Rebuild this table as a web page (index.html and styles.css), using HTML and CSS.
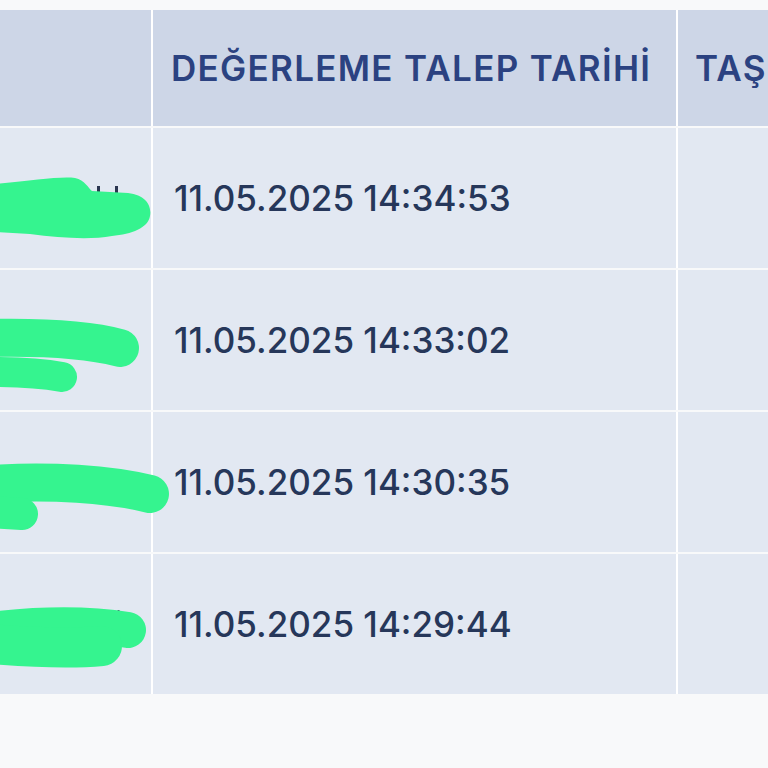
FILE: index.html
```html
<!DOCTYPE html>
<html lang="tr">
<head>
<meta charset="utf-8">
<link rel="stylesheet" href="styles.css">
</head>
<body>
<div class="page">
  <div class="table">
    <div class="row head">
      <div class="cell c1"></div>
      <div class="cell c2"><span class="th">DEĞERLEME TALEP TARİHİ</span></div>
      <div class="cell c3"><span class="th">TAŞINMAZ</span></div>
    </div>
    <div class="row">
      <div class="cell c1">
        <svg class="mask" viewBox="0 0 180 140" width="180" height="140">
          <rect x="97" y="58" width="3" height="10" fill="#2a3550"/>
          <rect x="115" y="58" width="3" height="10" fill="#2a3550"/>
          <path d="M-5 56 C30 53 60 48 75 50 C85 52 88 60 92 63 L128 65 C146 67 152 78 150 88 C148 100 132 106 112 108 C90 112 60 110 30 106 L-5 104 Z" fill="#35f48f"/>
        </svg>
      </div>
      <div class="cell c2"><span class="td">11.05.2025 14:34:53</span></div>
      <div class="cell c3"></div>
    </div>
    <div class="row">
      <div class="cell c1">
        <svg class="mask" viewBox="0 0 180 140" width="180" height="140">
          <rect x="116" y="59" width="2" height="2" fill="#2a3550"/>
          <path d="M-10 68 C40 67 90 70 120 78" stroke="#35f48f" stroke-width="38" stroke-linecap="round" fill="none"/>
          <path d="M-10 102 C20 102 45 104 62 107" stroke="#35f48f" stroke-width="30" stroke-linecap="round" fill="none"/>
        </svg>
      </div>
      <div class="cell c2"><span class="td">11.05.2025 14:33:02</span></div>
      <div class="cell c3"></div>
    </div>
    <div class="row">
      <div class="cell c1">
        <svg class="mask" viewBox="0 0 180 140" width="180" height="140">
          <rect x="116" y="60" width="2" height="2" fill="#2a3550"/>
          <rect x="98" y="61" width="2" height="2" fill="#2a3550"/>
          <path d="M-10 72 C50 68 110 72 150 82" stroke="#35f48f" stroke-width="38" stroke-linecap="round" fill="none"/>
          <path d="M-10 100 L22 102" stroke="#35f48f" stroke-width="32" stroke-linecap="round" fill="none"/>
        </svg>
      </div>
      <div class="cell c2"><span class="td">11.05.2025 14:30:35</span></div>
      <div class="cell c3"></div>
    </div>
    <div class="row last">
      <div class="cell c1">
        <svg class="mask" viewBox="0 0 180 140" width="180" height="140">
          <rect x="98" y="56" width="3" height="3" rx="1.5" fill="#2a3550"/>
          <rect x="117" y="56" width="3" height="3" rx="1.5" fill="#2a3550"/>
          <path d="M-10 76 C40 70 90 70 128 76" stroke="#35f48f" stroke-width="36" stroke-linecap="round" fill="none"/>
          <path d="M-10 90 C40 94 80 94 102 92" stroke="#35f48f" stroke-width="40" stroke-linecap="round" fill="none"/>
        </svg>
      </div>
      <div class="cell c2"><span class="td">11.05.2025 14:29:44</span></div>
      <div class="cell c3"></div>
    </div>
  </div>
</div>
</body>
</html>
```
FILE: styles.css
```css
* { box-sizing: border-box; }
html, body {
  margin: 0;
  padding: 0;
  background: #f8f9fa;
  width: 768px;
  height: 768px;
  overflow: hidden;
}
.page {
  padding-top: 10px;
  font-family: "Inter", "Open Sans", sans-serif;
}
.table {
  display: flex;
  flex-direction: column;
  gap: 2px;
  width: 768px;
}
.row {
  display: grid;
  grid-template-columns: 151px 523px 1fr;
  column-gap: 2px;
  height: 140px;
  background: #ffffff;
}
.row.head { height: 116px; }
.cell {
  background: #e2e8f2;
  display: flex;
  align-items: center;
  position: relative;
}
.head .cell { background: #cdd6e7; }
.c1 { overflow: visible; z-index: 1; }
.c3 { overflow: hidden; }
.c2 { padding-left: 21px; }
.head .c2 { padding-left: 18px; }
.c3 { padding-left: 17px; }
.th {
  font-size: 35px;
  font-weight: 600;
  color: #2b4281;
  letter-spacing: 1.3px;
  white-space: nowrap;
}
.td {
  font-size: 35px;
  font-weight: 500;
  color: #26375a;
  letter-spacing: 0;
  white-space: nowrap;
}
.mask { display: block; flex: none; }
```
